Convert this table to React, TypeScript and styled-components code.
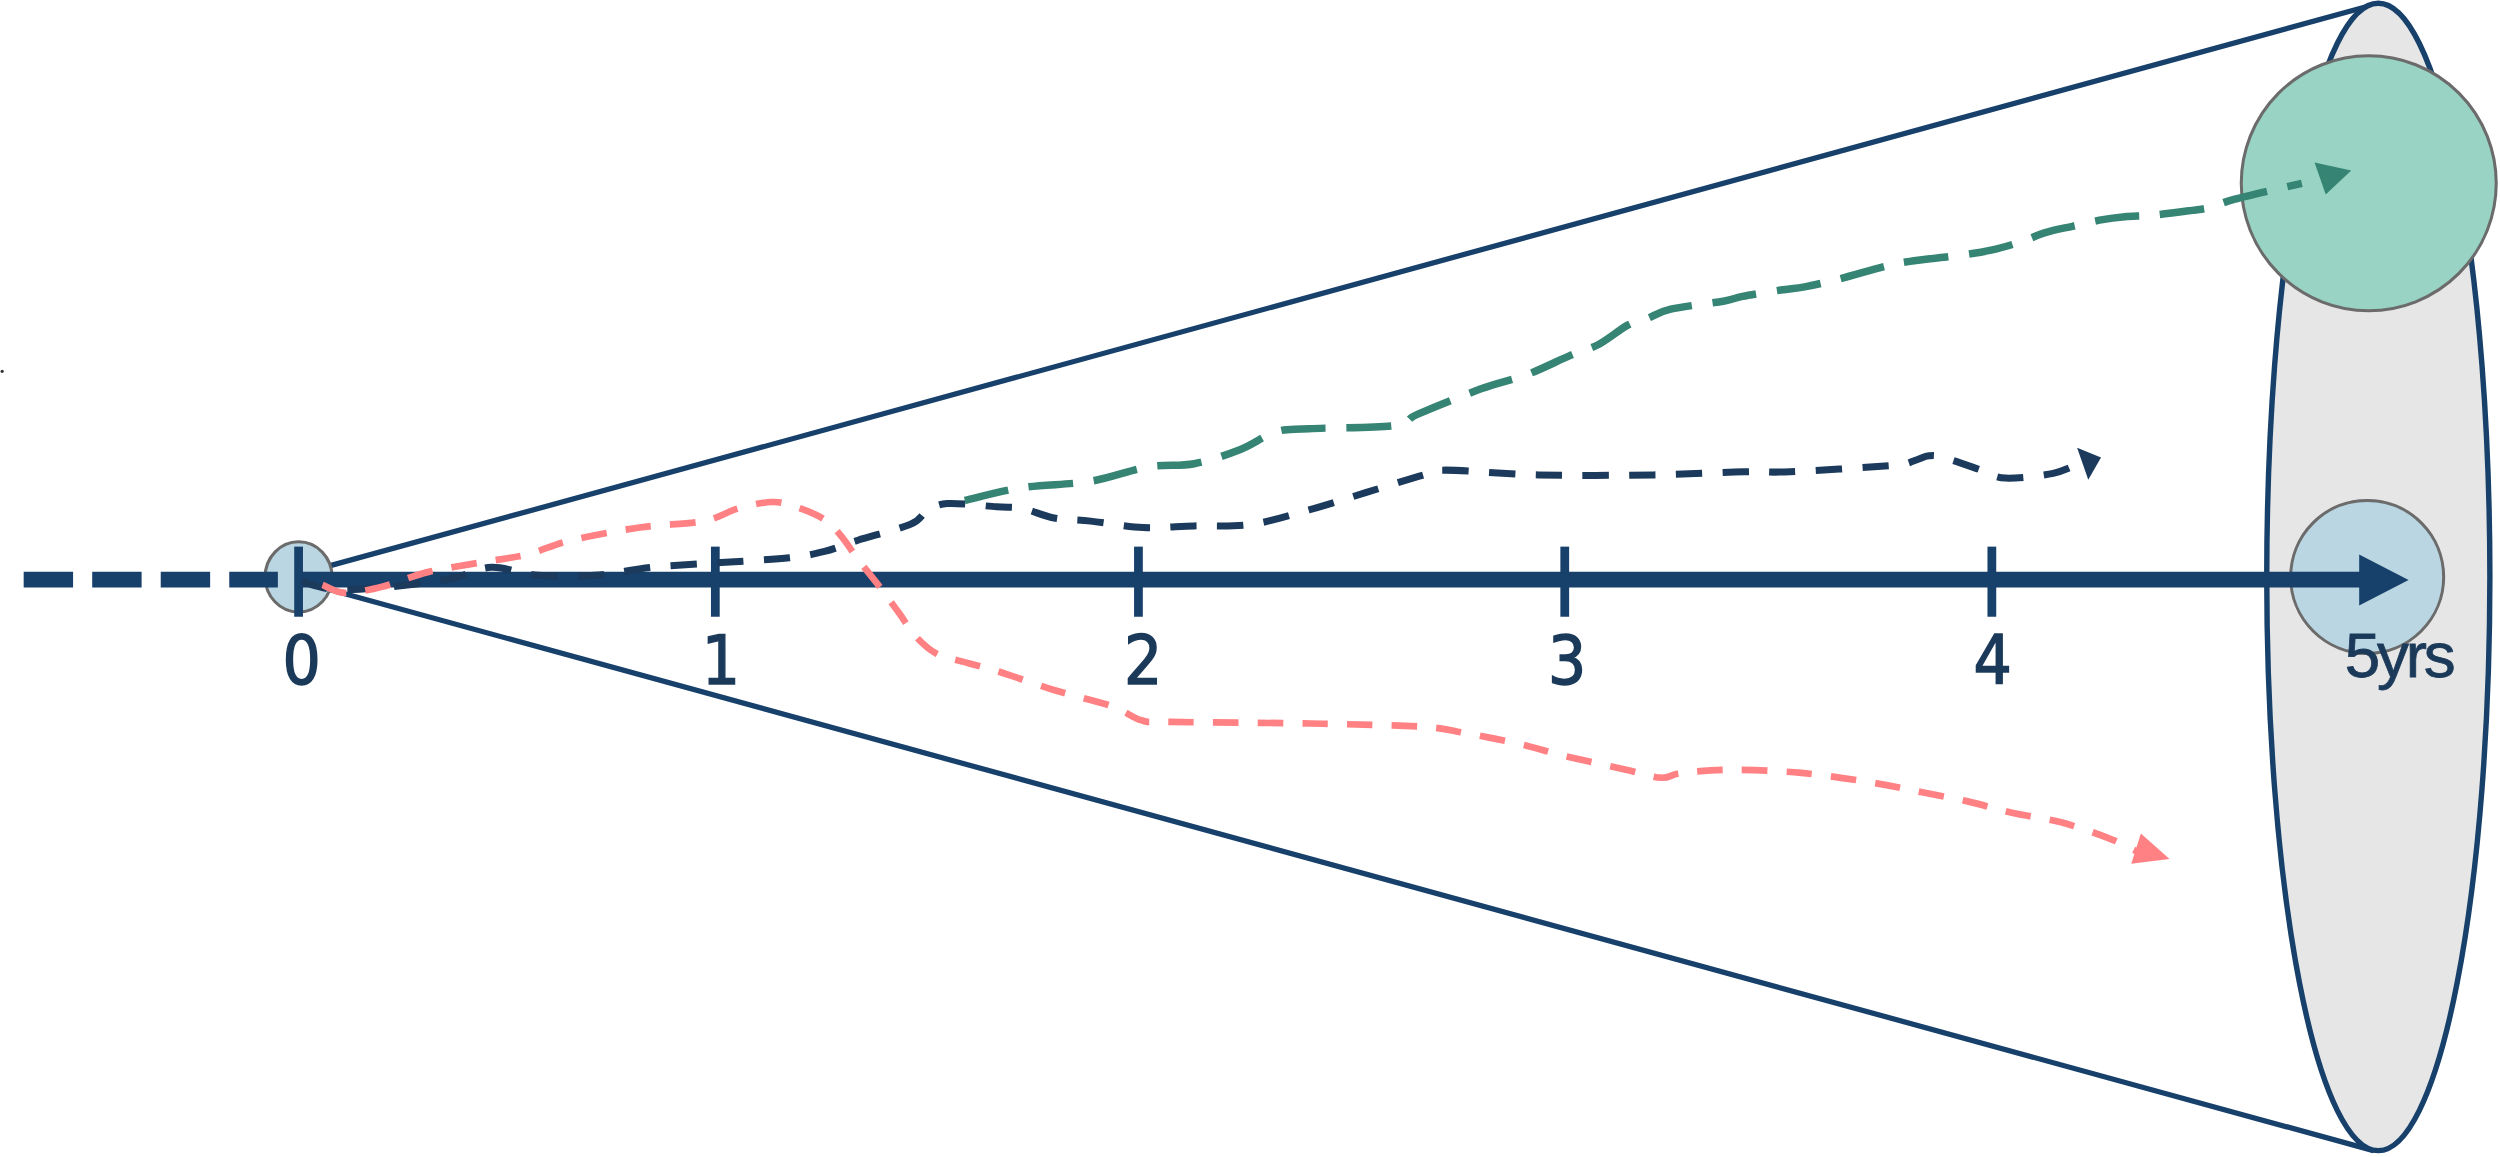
import React from 'react';
import styled, { createGlobalStyle } from 'styled-components';

type Pt = [number, number];

const NAVY = '#17406b';
const INK = '#1b3a5a';

const navyPath: Pt[] = [
  [189, 365], [211, 370], [247, 368], [283, 363], [308, 356], [337, 361], [373, 361],
  [409, 356], [452, 353], [495, 350], [517, 346], [538, 339], [571, 329], [581, 321],
  [594, 316], [625, 318], [641, 319], [661, 325], [684, 327], [717, 331], [749, 330],
  [785, 329], [821, 320], [857, 309], [893, 298], [907, 295], [965, 298], [1037, 298],
  [1094, 296], [1123, 296], [1187, 292], [1201, 289], [1210, 286], [1219, 287],
  [1243, 295], [1258, 300], [1288, 297], [1306, 290],
];

const greenPath: Pt[] = [
  [605, 314], [641, 306], [684, 302], [720, 293], [749, 291], [778, 282], [800, 271],
  [821, 269], [875, 267], [889, 260], [929, 244], [958, 235], [985, 223], [1003, 216],
  [1021, 204], [1033, 200], [1048, 194], [1081, 189], [1093, 186], [1117, 182],
  [1132, 180], [1154, 175], [1183, 167], [1198, 164], [1231, 160], [1249, 157],
  [1267, 152], [1283, 146], [1300, 142], [1318, 138], [1333, 136], [1351, 135],
  [1375, 132], [1387, 130], [1402, 125], [1444, 115],
];

const pinkPath: Pt[] = [
  [202, 367], [216, 372], [240, 368], [268, 359], [301, 353], [330, 348], [358, 339],
  [401, 331], [441, 327], [463, 319], [484, 315], [499, 318], [517, 326], [528, 337],
  [538, 351], [553, 370], [564, 385], [574, 399], [587, 410], [603, 415], [625, 421],
  [661, 433], [697, 443], [716, 452], [734, 453], [822, 454], [892, 456], [919, 460],
  [954, 467], [980, 474], [1020, 483], [1042, 488], [1055, 485], [1086, 483],
  [1130, 485], [1174, 491], [1205, 497], [1235, 503], [1262, 510], [1293, 516],
  [1323, 526], [1340, 534],
];

// catmull-rom through the traced points
const smooth = (pts: Pt[]): string => {
  let d = `M${pts[0][0]} ${pts[0][1]}`;
  for (let i = 0; i < pts.length - 1; i++) {
    const p0 = pts[i - 1] || pts[i];
    const p1 = pts[i];
    const p2 = pts[i + 1];
    const p3 = pts[i + 2] || p2;
    const c1x = p1[0] + (p2[0] - p0[0]) / 6;
    const c1y = p1[1] + (p2[1] - p0[1]) / 6;
    const c2x = p2[0] - (p3[0] - p1[0]) / 6;
    const c2y = p2[1] - (p3[1] - p1[1]) / 6;
    d += ` C${c1x.toFixed(1)} ${c1y.toFixed(1)} ${c2x.toFixed(1)} ${c2y.toFixed(1)} ${p2[0]} ${p2[1]}`;
  }
  return d;
};

const ticks = [
  { x: 187, label: '0', lx: 189 },
  { x: 448.5, label: '1', lx: 452 },
  { x: 714, label: '2', lx: 717 },
  { x: 981.5, label: '3', lx: 983 },
  { x: 1249.5, label: '4', lx: 1250 },
];

const GlobalStyle = createGlobalStyle`
  html, body {
    margin: 0;
    padding: 0;
    background: #ffffff;
    overflow: hidden;
  }
`;

const Page = styled.div`
  width: 2500px;
  height: 1157px;
  background: #ffffff;
`;

const Diagram = styled.svg`
  display: block;
  width: 2500px;
  height: 1157px;
`;

const ConeEdge = styled.line`
  stroke: ${NAVY};
  stroke-width: 3.3;
`;

const Horizon = styled.ellipse`
  fill: #e6e6e6;
  stroke: ${NAVY};
  stroke-width: 3.4;
`;

const Outcome = styled.ellipse<{ $fill: string }>`
  fill: ${(p) => p.$fill};
  stroke: #6b6b6b;
  stroke-width: 1.9;
`;

const Axis = styled.line<{ $dashed?: boolean }>`
  stroke: ${NAVY};
  stroke-width: 10;
  stroke-dasharray: ${(p) => (p.$dashed ? '31 12' : 'none')};
`;

const Tick = styled.line`
  stroke: ${NAVY};
  stroke-width: 5.5;
`;

const Trail = styled.path<{ $color: string; $width: number; $dash: string }>`
  fill: none;
  stroke: ${(p) => p.$color};
  stroke-width: ${(p) => p.$width};
  stroke-dasharray: ${(p) => p.$dash};
`;

const Head = styled.polygon<{ $color: string }>`
  fill: ${(p) => p.$color};
`;

const TickLabel = styled.text`
  font-family: 'DejaVu Sans Condensed', 'DejaVu Sans', sans-serif;
  font-size: 42px;
  fill: ${INK};
  stroke: ${INK};
  stroke-width: 0.9;
  text-anchor: middle;
`;

const YearsLabel = styled.text`
  font-family: 'Liberation Sans', Arial, sans-serif;
  font-size: 40px;
  letter-spacing: -2px;
  fill: ${INK};
  stroke: ${INK};
  stroke-width: 0.5;
`;

export default function App() {
  return (
    <Page>
      <GlobalStyle />
      <Diagram viewBox="0 0 1568 726" xmlns="http://www.w3.org/2000/svg">
        <circle cx={1} cy={233} r={1} fill="#333" />

        <ConeEdge x1={192} y1={359} x2={1489} y2={3} />
        <ConeEdge x1={192} y1={366} x2={1489} y2={722} />

        <Horizon cx={1492} cy={362} rx={70} ry={360} />
        <Outcome $fill="#98d3c3" cx={1486} cy={115} rx={80} ry={80} />
        <Outcome $fill="#b9d6e2" cx={1485} cy={362} rx={48} ry={48} />
        <Outcome $fill="#b9d6e2" cx={187} cy={362} rx={21} ry={22} />

        <Axis $dashed x1={14.5} y1={363.7} x2={174} y2={363.7} />
        <Axis x1={187} y1={363.7} x2={1484} y2={363.7} />
        <Head $color={NAVY} points="1480,348 1511,364 1480,380" />

        {ticks.map((t) => (
          <Tick key={t.label} x1={t.x} y1={343} x2={t.x} y2={387} />
        ))}

        <Trail $color="#1b3a5c" $width={4.4} $dash="16.5 12.8" d={smooth(navyPath)} />
        <Head $color="#1b3a5c" points="1303,281 1318,287 1310,301" />

        <Trail $color="#368473" $width={4.7} $dash="28 13" d={smooth(greenPath)} />
        <Head $color="#368473" points="1452,102 1475,107 1459,122" />

        <Trail $color="#ff8183" $width={4.2} $dash="16 12" d={smooth(pinkPath)} />
        <Head $color="#ff8183" points="1343,523 1361,539 1337,542" />

        {ticks.map((t) => (
          <TickLabel key={t.label} x={t.lx} y={429}>
            {t.label}
          </TickLabel>
        ))}
        <YearsLabel x={1471} y={425}>5yrs</YearsLabel>
      </Diagram>
    </Page>
  );
}
